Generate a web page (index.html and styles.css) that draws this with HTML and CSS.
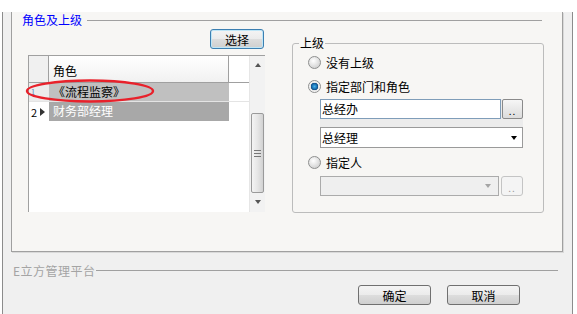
FILE: index.html
```html
<!DOCTYPE html>
<html lang="zh-CN">
  <head>
    <meta charset="UTF-8" />
    <title>角色及上级</title>
    <link rel="stylesheet" href="styles.css">
  </head>
  <body>
    <div class="dialog">
      <!-- 角色及上级 -->
      <div class="panel">
        <div class="group-title">
          <span>角色及上级</span>
          <i class="rule"></i>
        </div>
        <div class="role-body">
          <div class="role-left">
            <button class="btn btn-pick">选择</button>
            <div class="grid">
              <div class="grid-main">
                <div class="grid-head">
                  <div class="rh"></div>
                  <div class="ch">角色</div>
                </div>
                <div class="grid-row row-dim">
                  <div class="rn">1</div>
                  <div class="cell">《流程监察》</div>
                </div>
                <div class="grid-row row-cur">
                  <div class="rn">2<span class="cur-arrow"></span></div>
                  <div class="cell">财务部经理</div>
                </div>
              </div>
              <div class="vscroll">
                <div class="sb-btn"><span class="tri-up"></span></div>
                <div class="sb-gap"></div>
                <div class="sb-thumb"><span class="grip"></span></div>
                <div class="sb-btn sb-down"><span class="tri-down"></span></div>
              </div>
            </div>
            <!-- 빨간 표시 -->
            <svg class="mark" width="132" height="28" viewBox="0 0 132 28">
              <ellipse cx="65" cy="14" rx="63" ry="10.5" fill="none" stroke="#e8212b" stroke-width="2.4" />
            </svg>
          </div>

          <fieldset class="superior">
            <legend>上级</legend>
            <label class="opt opt-first"><span class="radio"></span>没有上级</label>
            <label class="opt"><span class="radio on"></span>指定部门和角色</label>
            <div class="pick">
              <div class="pick-row">
                <div class="textbox">总经办</div>
                <span class="dots">..</span>
              </div>
              <div class="combo">总经理<span class="tri-down dark"></span></div>
            </div>
            <label class="opt"><span class="radio"></span>指定人</label>
            <div class="pick-row person">
              <div class="combo off"><span class="tri-down"></span></div>
              <span class="dots off">..</span>
            </div>
          </fieldset>
        </div>
      </div>

      <div class="footer">
        <div class="brand"><span>E立方管理平台</span><i class="rule"></i></div>
        <div class="actions">
          <button class="btn">确定</button>
          <button class="btn">取消</button>
        </div>
      </div>
    </div>
  </body>
</html>
```

FILE: styles.css
```css
body {
  margin: 0;
  background: #ffffff;
  font-family: "Noto Sans CJK SC", "Liberation Sans", sans-serif;
  font-size: 12px;
  color: #000;
}

.dialog {
  margin-left: 2px;
  width: 571px;
  box-sizing: border-box;
  border: 1px solid #8c8c8c;
  border-top: none;
  background: #f0f0f0;
  padding-bottom: 17px;
}

.panel {
  margin: 0 9px 0 8px;
  width: 552px;
  height: 240px;
  box-sizing: border-box;
  border: 1px solid #a0a0a0;
  border-top: none;
  background: #f7f6f4;
  box-shadow: 1px 1px 0 #d9d9d9;
}

.group-title {
  display: flex;
  align-items: center;
  height: 16px;
  line-height: 16px;
  margin: 12px 20px 0 10px;
  color: #0000ff;
}

.rule {
  flex: 1;
  height: 1px;
  margin-left: 5px;
  background: #a0a0a0;
}

.role-body {
  display: flex;
  align-items: flex-start;
  margin-left: 16px;
}

/* 왼쪽 목록 */
.role-left {
  position: relative;
  width: 237px;
  margin-top: 1px;
  display: flex;
  flex-direction: column;
}

.btn {
  font-family: inherit;
  font-size: 12px;
  height: 20px;
  padding: 0;
  border: 1px solid #707070;
  border-radius: 3px;
  background: linear-gradient(#f4f4f4 0%, #ebebeb 50%, #dddddd 51%, #cfcfcf 100%);
  color: #000;
  line-height: 17px;
}

.btn-pick {
  align-self: flex-end;
  margin-right: 1px;
  width: 54px;
  border-color: #3c7fb1;
  box-shadow: inset 0 0 0 1px #bfe6f7;
}

.grid {
  margin-top: 6px;
  height: 157px;
  box-sizing: border-box;
  border-left: 1px solid #a0a0a0;
  border-top: 1px solid #a0a0a0;
  display: flex;
  background: #fff;
}

.grid-main {
  width: 220px;
}

.grid-head {
  display: flex;
  height: 27px;
  box-sizing: border-box;
  border-bottom: 1px solid #a0a0a0;
}

.rh {
  width: 20px;
  box-sizing: border-box;
  border-right: 1px solid #a0a0a0;
  background: #f0f0f0;
}

.ch {
  width: 180px;
  box-sizing: border-box;
  border-right: 1px solid #a0a0a0;
  background: linear-gradient(#ffffff, #f1f1f1);
  padding-left: 4px;
  line-height: 30px;
}

.grid-row {
  display: flex;
  height: 19px;
  line-height: 18px;
  box-sizing: border-box;
}

.rn {
  width: 20px;
  display: flex;
  align-items: center;
  padding-left: 2px;
  box-sizing: border-box;
  font-size: 11px;
}

.cell {
  width: 180px;
  padding-left: 4px;
  box-sizing: border-box;
}

.row-dim {
  border-bottom: 1px solid #e4e4e4;
}

.row-dim .rn {
  background: #ececec;
  color: #4a7fc0;
  font-size: 7px;
}

.row-dim .cell {
  background: #c0c0c0;
}

.row-cur .cell {
  background: #a8a8a8;
  color: #fff;
}

.cur-arrow {
  margin-left: 3px;
  border-top: 4px solid transparent;
  border-bottom: 4px solid transparent;
  border-left: 5px solid #333;
}

/* 스크롤바 */
.vscroll {
  width: 16px;
  display: flex;
  flex-direction: column;
  background: #f2f2f2;
  border-left: 1px solid #e6e6e6;
  box-sizing: border-box;
}

.sb-btn {
  height: 17px;
  display: flex;
  align-items: center;
  justify-content: center;
}

.sb-down {
  height: 18px;
}

.sb-gap {
  height: 40px;
}

.sb-thumb {
  height: 80px;
  margin: 0 1px;
  border: 1px solid #9a9a9a;
  border-radius: 2px;
  box-sizing: border-box;
  background: linear-gradient(90deg, #f4f4f4, #e6e6e6 50%, #d2d2d2);
  display: flex;
  align-items: center;
  justify-content: center;
}

.grip {
  width: 7px;
  height: 5px;
  border-top: 1px solid #777;
  border-bottom: 1px solid #777;
  background: linear-gradient(transparent 2px, #777 2px, #777 3px, transparent 3px);
}

.tri-up {
  border-left: 3px solid transparent;
  border-right: 3px solid transparent;
  border-bottom: 4px solid #555;
}

.tri-down {
  border-left: 3px solid transparent;
  border-right: 3px solid transparent;
  border-top: 4px solid #555;
}

.mark {
  position: absolute;
  left: -3px;
  top: 48px;
}

/* 상급 */
.superior {
  margin: 7px 0 0 27px;
  padding: 0;
  width: 252px;
  height: 178px;
  box-sizing: border-box;
  border: 1px solid #bcbcbc;
  border-radius: 3px;
  min-width: 0;
}

.superior legend {
  margin-left: 6px;
  padding: 0 1px;
  line-height: 16px;
}

.opt {
  display: flex;
  align-items: center;
  height: 20px;
  margin: 4px 0 0 15px;
}

.opt-first {
  margin-top: 1px;
}

.radio {
  width: 13px;
  height: 13px;
  margin-right: 5px;
  box-sizing: border-box;
  border-radius: 50%;
  border: 1px solid #8e8f8f;
  background: radial-gradient(circle at 40% 35%, #ffffff, #dcdcdc 60%, #c8c8c8);
}

.radio.on {
  background: radial-gradient(circle at 50% 50%, #43b2ec 0, #1a6fb0 2.5px, #0c4a84 3.5px, #e4e4e4 4px, #ffffff 6px);
}

.pick {
  margin: 3px 0 0 27px;
  width: 203px;
  background: #ececec;
}

.pick-row {
  display: flex;
  justify-content: space-between;
  align-items: center;
}

.textbox {
  width: 181px;
  height: 20px;
  box-sizing: border-box;
  border: 1px solid #7f9db9;
  background: #fff;
  padding-left: 1px;
  line-height: 18px;
}

.dots {
  width: 21px;
  height: 20px;
  box-sizing: border-box;
  border: 1px solid #8a8a8a;
  border-radius: 2px;
  background: linear-gradient(#f6f6f6, #dcdcdc);
  text-align: center;
  line-height: 22px;
  font-size: 10px;
  letter-spacing: 1px;
}

.combo {
  height: 21px;
  margin-top: 8px;
  box-sizing: border-box;
  border: 1px solid #9a9a9a;
  background: #fff;
  padding: 0 5px 0 1px;
  display: flex;
  justify-content: space-between;
  align-items: center;
}

.tri-down.dark {
  border-top-color: #000;
}

.person {
  margin: 4px 0 0 27px;
  width: 203px;
}

.combo.off {
  width: 179px;
  height: 20px;
  margin-top: 0;
  border-color: #ababab;
  background: #efefef;
  justify-content: flex-end;
  padding-right: 7px;
}

.combo.off .tri-down {
  border-top-color: #a4a4a4;
}

.dots.off {
  width: 22px;
  border-color: #c4c4c4;
  border-radius: 3px;
  background: #f4f4f4;
  color: #9a9a9a;
}

/* 아래쪽 */
.footer {
  padding-top: 10px;
}

.brand {
  display: flex;
  align-items: center;
  height: 16px;
  margin: 0 14px 0 10px;
  color: #a4a4a4;
  font-size: 12px;
  letter-spacing: 0.5px;
}

.brand .rule {
  margin-left: 0;
}

.actions {
  display: flex;
  justify-content: flex-end;
  gap: 16px;
  margin: 7px 52px 0 0;
}

.actions .btn {
  width: 73px;
}
```
